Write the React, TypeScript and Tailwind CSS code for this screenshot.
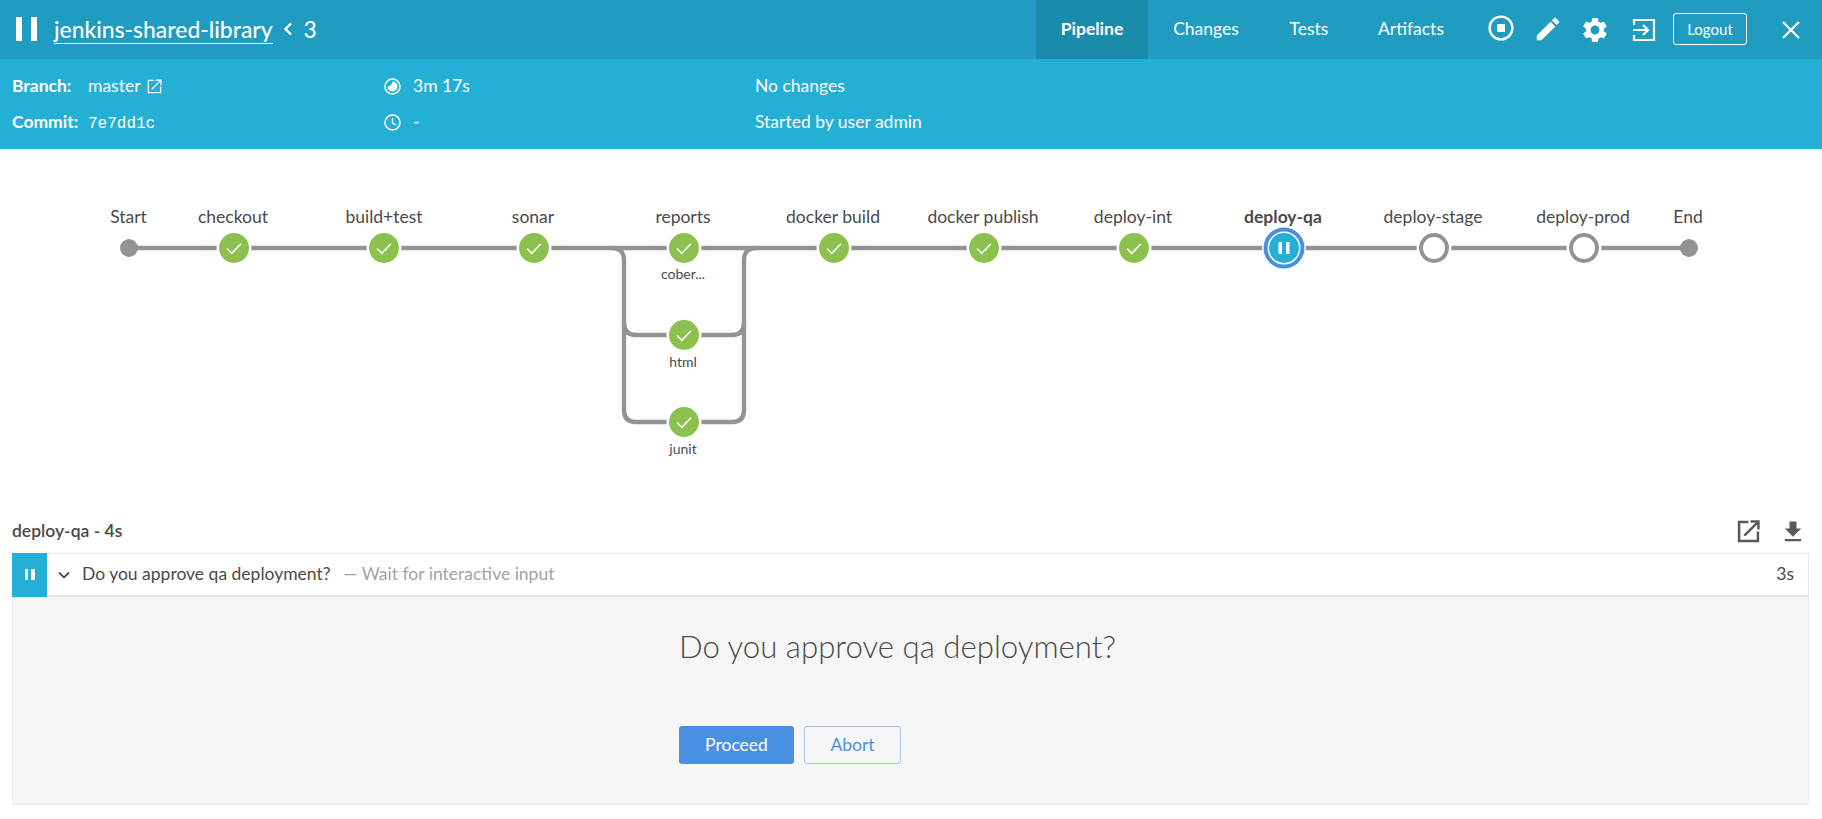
import { MdEdit, MdFileDownload, MdSettings } from "react-icons/md";

const GREY = "#949393";
const GREEN = "#8cc04f";
const ROW_Y = [248, 335, 422];

const successNodes = [
    { x: 234, y: ROW_Y[0] },
    { x: 384, y: ROW_Y[0] },
    { x: 534, y: ROW_Y[0] },
    { x: 684, y: ROW_Y[0] },
    { x: 684, y: ROW_Y[1] },
    { x: 684, y: ROW_Y[2] },
    { x: 834, y: ROW_Y[0] },
    { x: 984, y: ROW_Y[0] },
    { x: 1134, y: ROW_Y[0] },
];

const topLabels = [
    { x: 128.5, text: "Start" },
    { x: 233, text: "checkout" },
    { x: 384, text: "build+test" },
    { x: 533, text: "sonar" },
    { x: 683, text: "reports" },
    { x: 833, text: "docker build" },
    { x: 983, text: "docker publish" },
    { x: 1133, text: "deploy-int" },
    { x: 1283, text: "deploy-qa", bold: true },
    { x: 1433, text: "deploy-stage" },
    { x: 1583, text: "deploy-prod" },
    { x: 1688, text: "End" },
];

const subLabels = [
    { y: 279, text: "cober..." },
    { y: 367, text: "html" },
    { y: 454, text: "junit" },
];

function PipelineGraph() {
    return (
        <svg width="1822" height="361" viewBox="0 149 1822 361" className="block">
            <g fill="none" stroke={GREY} strokeWidth="4.4">
                <path d="M129 248H1689" />
                <path d="M612 248Q624 248 624 260V323Q624 335 636 335H732Q744 335 744 323V260Q744 248 756 248" />
                <path d="M624 323V410Q624 422 636 422H732Q744 422 744 410V323" />
            </g>
            <circle cx="129" cy="248" r="9" fill={GREY} />
            <circle cx="1689" cy="248" r="9" fill={GREY} />
            {successNodes.map((n) => (
                <g key={`${n.x}-${n.y}`}>
                    <circle cx={n.x} cy={n.y} r="17.5" fill="#fff" />
                    <circle cx={n.x} cy={n.y} r="15" fill={GREEN} />
                    <path d={`M${n.x - 7} ${n.y + 0.5}l4.8 4.8l9.2 -9.6`} fill="none" stroke="#fff" strokeWidth="1.6" />
                </g>
            ))}
            {/* paused node */}
            <circle cx="1284" cy="248" r="22" fill="#fff" />
            <circle cx="1284" cy="248" r="18.5" fill="#fff" stroke="#4a90e2" strokeWidth="4" />
            <circle cx="1284" cy="248" r="15" fill="#24b0d5" />
            <rect x="1278.5" y="242" width="3.5" height="12" fill="#fff" />
            <rect x="1286" y="242" width="3.5" height="12" fill="#fff" />
            {/* not started */}
            {[1434, 1584].map((x) => (
                <g key={x}>
                    <circle cx={x} cy="248" r="17.5" fill="#fff" />
                    <circle cx={x} cy="248" r="13" fill="#fff" stroke={GREY} strokeWidth="4" />
                </g>
            ))}
            <g className="font-[Lato,sans-serif] text-[17.5px]" fill="#4a4a4a" textAnchor="middle">
                {topLabels.map((l) => (
                    <text key={l.text} x={l.x} y="222.5" fontWeight={l.bold ? 700 : 400}>
                        {l.text}
                    </text>
                ))}
            </g>
            <g className="font-[Lato,sans-serif] text-[14px]" fill="#4a4a4a" textAnchor="middle">
                {subLabels.map((l) => (
                    <text key={l.text} x="683" y={l.y}>
                        {l.text}
                    </text>
                ))}
            </g>
        </svg>
    );
}

function ExternalIcon({ size, stroke }: { size: number; stroke: number }) {
    return (
        <svg width={size} height={size} viewBox="0 0 22 22" fill="none" stroke="currentColor" strokeWidth={stroke}>
            <path d="M11 2H2V20H20V11" />
            <path d="M7 15L20 2M13 1.5H20.5V9" />
        </svg>
    );
}

export default function App() {
    return (
        <div className="w-[1822px] h-[819px] overflow-hidden bg-white text-[#4a4a4a] font-[Lato,sans-serif]">
            <header className="h-[59px] bg-[#209cc0] text-white flex items-center">
                <div className="flex items-center w-[1036px]">
                    <div className="ml-4 flex gap-[9px]">
                        <span className="block w-[6px] h-6 bg-white" />
                        <span className="block w-[6px] h-6 bg-white" />
                    </div>
                    <a className="ml-[17px] mt-[1px] text-[22.9px] leading-[28px] font-medium border-b border-white">jenkins-shared-library</a>
                    <svg width="10" height="14" viewBox="0 0 10 14" fill="none" stroke="currentColor" strokeWidth="2.4" className="ml-[10px]">
                        <path d="M8 1.5L2.5 7L8 12.5" />
                    </svg>
                    <span className="ml-[11px] text-[22.9px] font-medium">3</span>
                </div>
                <nav className="flex h-full text-[17.5px]">
                    <a className="w-[112px] flex items-center justify-center bg-[#1b8bac] font-bold">Pipeline</a>
                    <a className="w-[116px] flex items-center justify-center">Changes</a>
                    <a className="w-[90px] flex items-center justify-center">Tests</a>
                    <a className="w-[116px] flex items-center justify-center pr-[2px]">Artifacts</a>
                </nav>
                <div className="flex items-center ml-[18px]">
                    <svg width="26" height="26" viewBox="0 0 26 26" fill="none" stroke="currentColor" strokeWidth="2.4" className="-mt-1">
                        <circle cx="13" cy="13" r="11.4" />
                        <rect x="9" y="9" width="8" height="8" fill="currentColor" stroke="none" />
                    </svg>
                    <MdEdit size={30} className="ml-[19px] -mt-[1px]" />
                    <MdSettings size={30} className="ml-[17px]" />
                    <svg width="24" height="24" viewBox="0 0 24 24" fill="none" stroke="currentColor" strokeWidth="2.2" className="ml-[22px]">
                        <path d="M2 7V2H22V22H2V17" />
                        <path d="M1 12H16M11 7L16 12L11 17" />
                    </svg>
                    <button className="ml-[17px] w-[74px] h-8 rounded-[3px] border border-white text-[15px] -mt-[1px]">Logout</button>
                    <svg width="18" height="18" viewBox="0 0 18 18" fill="none" stroke="currentColor" strokeWidth="2.2" className="ml-[35px]">
                        <path d="M1 1L17 17M17 1L1 17" />
                    </svg>
                </div>
            </header>
            <section className="h-[90px] bg-[#24afd5] text-white text-[17.5px] flex pt-[15px]">
                <div className="w-[384px] pl-3 flex flex-col gap-[12px]">
                    <div className="flex items-center h-6">
                        <span className="w-[76px] font-bold">Branch:</span>
                        <span>master</span>
                        <span className="ml-[6px]"><ExternalIcon size={15} stroke={1.8} /></span>
                    </div>
                    <div className="flex items-center h-6">
                        <span className="w-[76px] font-bold">Commit:</span>
                        <span className="mt-[3px] font-['Liberation_Mono',monospace] text-[16px]">7e7dd1c</span>
                    </div>
                </div>
                <div className="w-[371px] flex flex-col gap-[12px]">
                    <div className="flex items-center h-6">
                        <svg width="17" height="17" viewBox="0 0 17 17" fill="none" stroke="currentColor" strokeWidth="1.6">
                            <circle cx="8.5" cy="8.5" r="7.5" />
                            <path d="M8.5 3.5A5 5 0 1 1 3.5 8.5C6 8.5 8.5 6 8.5 3.5Z" fill="currentColor" stroke="none" />
                        </svg>
                        <span className="ml-3">3m 17s</span>
                    </div>
                    <div className="flex items-center h-6">
                        <svg width="17" height="17" viewBox="0 0 17 17" fill="none" stroke="currentColor" strokeWidth="1.6">
                            <circle cx="8.5" cy="8.5" r="7.5" />
                            <path d="M8.5 4V9L12 11" strokeWidth="1.3" />
                        </svg>
                        <span className="ml-3">-</span>
                    </div>
                </div>
                <div className="flex flex-col gap-[12px]">
                    <div className="flex items-center h-6">No changes</div>
                    <div className="flex items-center h-6">Started by user admin</div>
                </div>
            </section>
            <PipelineGraph />
            <div className="h-[43px] pl-3 pr-[20px] flex items-center justify-between">
                <span className="text-[17.5px] font-semibold -mt-[1px]">deploy-qa - 4s</span>
                <div className="flex items-center text-[#5a5a5a] gap-[24px]">
                    <ExternalIcon size={23} stroke={2.4} />
                    <MdFileDownload size={28} className="-mx-[5px]" />
                </div>
            </div>
            <div className="mx-3 w-[1797px]">
                <div className="h-[44px] flex items-center border border-[#e6e6e6] border-l-0 border-b-2 bg-white">
                    <div className="w-[35px] h-[44px] -my-px bg-[#24afd5] flex items-center justify-center gap-[3px]">
                        <span className="block w-[3.5px] h-[11px] bg-white" />
                        <span className="block w-[3.5px] h-[11px] bg-white" />
                    </div>
                    <svg width="12" height="8" viewBox="0 0 12 8" fill="none" stroke="#4a4a4a" strokeWidth="1.8" className="ml-[11px]">
                        <path d="M1 1.5L6 6.5L11 1.5" />
                    </svg>
                    <span className="ml-[12px] text-[17.5px] -mt-[1px]">Do you approve qa deployment?</span>
                    <span className="ml-[13px] text-[17.5px] text-[#a3a3a3] -mt-[1px]">— Wait for interactive input</span>
                    <span className="ml-auto mr-[14px] text-[17.5px] -mt-[1px]">3s</span>
                </div>
                <div className="h-[208px] bg-[#f6f6f6] border border-t-0 border-[#ececec]">
                    <div className="mx-auto w-[463px]">
                        <h2 className="pt-[31px] text-[31.2px] leading-[36px] font-light whitespace-nowrap text-[#4a4a4a]">Do you approve qa deployment?</h2>
                        <div className="mt-[62px] flex gap-[10px]">
                            <button className="w-[115px] h-[38px] rounded-[3px] bg-[#4a90e2] text-white text-[17.5px]">Proceed</button>
                            <button className="w-[97px] h-[38px] rounded-[3px] border border-[#a6c4ea] text-[#4a90e2] text-[17.5px]">Abort</button>
                        </div>
                    </div>
                </div>
            </div>
        </div>
    );
}
